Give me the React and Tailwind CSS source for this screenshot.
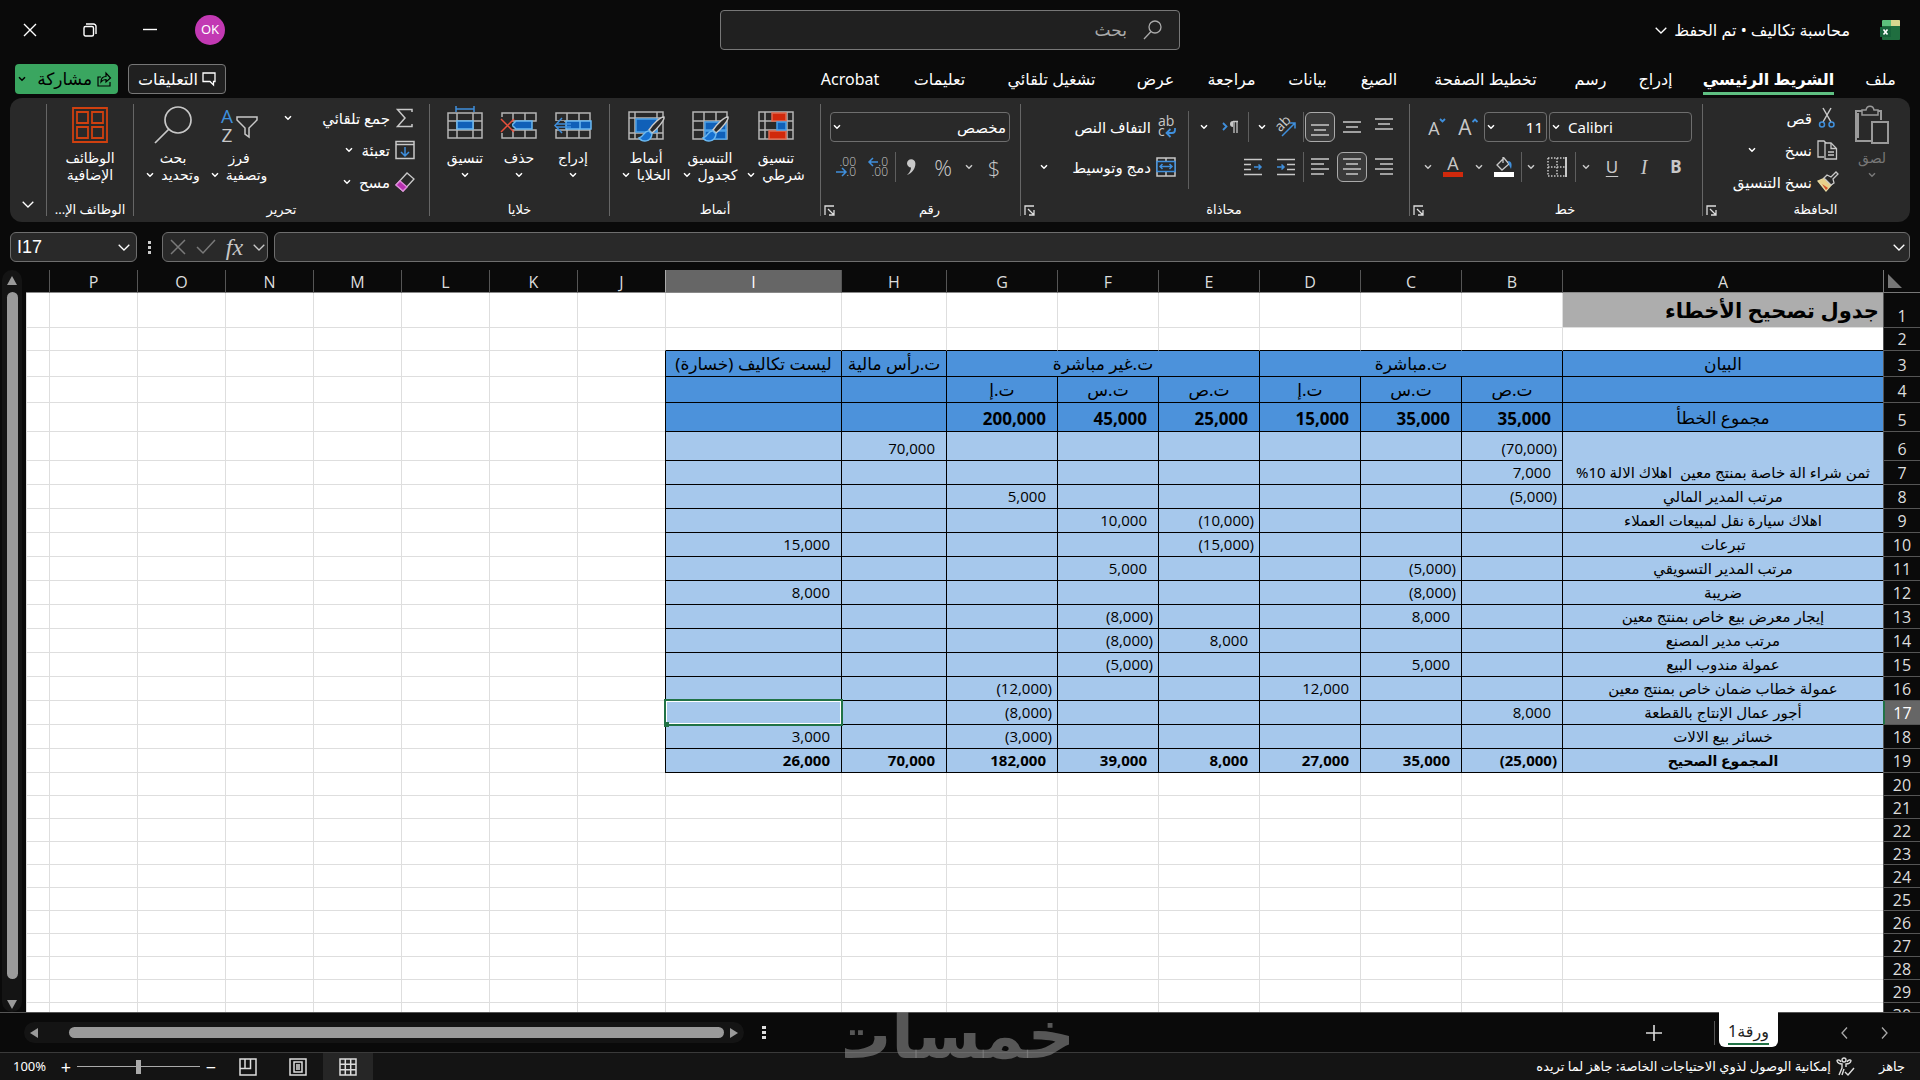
import React, { useState } from "react";
import clsx from "clsx";


const tabs = [
  { name: "ملف", width: "w-[59px]" },
  { name: "الشريط الرئيسي", width: "w-[165px]", active: true },
  { name: "إدراج", width: "w-[61px]" },
  { name: "رسم", width: "w-[69px]" },
  { name: "تخطيط الصفحة", width: "w-[141px]" },
  { name: "الصيغ", width: "w-[72px]" },
  { name: "بيانات", width: "w-[71px]" },
  { name: "مراجعة", width: "w-[81px]" },
  { name: "عرض", width: "w-[71px]" },
  { name: "تشغيل تلقائي", width: "w-[137px]" },
  { name: "تعليمات", width: "w-[87px]" },
  { name: "Acrobat", width: "w-[92px]" },
];

const columns = [
  { name: "A", width: "w-[321px]" },
  { name: "B", width: "w-[101px]" },
  { name: "C", width: "w-[101px]" },
  { name: "D", width: "w-[101px]" },
  { name: "E", width: "w-[101px]" },
  { name: "F", width: "w-[101px]" },
  { name: "G", width: "w-[111px]" },
  { name: "H", width: "w-[105px]" },
  { name: "I", width: "w-[176px]" },
  { name: "J", width: "w-[88px]" },
  { name: "K", width: "w-[88px]" },
  { name: "L", width: "w-[88px]" },
  { name: "M", width: "w-[88px]" },
  { name: "N", width: "w-[88px]" },
  { name: "O", width: "w-[88px]" },
  { name: "P", width: "w-[88px]" },
  { name: "", width: "" },
];

// label first, then the columns B..I
const entries = {
  5: ["مجموع الخطأ", "35,000", "35,000", "15,000", "25,000", "45,000", "200,000", "", ""],
  6: ["ثمن شراء الة خاصة بمنتج معين  اهلاك الالة 10%", "(70,000)", "", "", "", "", "", "70,000", ""],
  7: [null, "7,000", "", "", "", "", "", "", ""],
  8: ["مرتب المدير المالي", "(5,000)", "", "", "", "", "5,000", "", ""],
  9: ["اهلاك سيارة نقل لمبيعات العملاء", "", "", "", "(10,000)", "10,000", "", "", ""],
  10: ["تبرعات", "", "", "", "(15,000)", "", "", "", "15,000"],
  11: ["مرتب المدير التسويقي", "", "(5,000)", "", "", "5,000", "", "", ""],
  12: ["ضريبة", "", "(8,000)", "", "", "", "", "", "8,000"],
  13: ["إيجار معرض بيع خاص بمنتج معين", "", "8,000", "", "", "(8,000)", "", "", ""],
  14: ["مرتب مدير المصنع", "", "", "", "8,000", "(8,000)", "", "", ""],
  15: ["عمولة مندوب البيع", "", "5,000", "", "", "(5,000)", "", "", ""],
  16: ["عمولة خطاب ضمان خاص بمنتج معين", "", "", "12,000", "", "", "(12,000)", "", ""],
  17: ["أجور عمال الإنتاج بالقطعة", "8,000", "", "", "", "", "(8,000)", "", ""],
  18: ["خسائر بيع الالات", "", "", "", "", "", "(3,000)", "", "3,000"],
  19: ["المجموع الصحيح", "(25,000)", "35,000", "27,000", "8,000", "39,000", "182,000", "70,000", "26,000"],
};

const rowHeight = (n) => {
  if (n === 1) return "h-[35px]";
  if (n === 3 || n === 4) return "h-[26px]";
  if (n === 5 || n === 6) return "h-[29px]";
  if (n > 6 && n < 20) return "h-[24px]";
  return "h-[23px]";
};


/* ---------- icons ---------- */

function Chevron({ className = "w-2 h-[6px]" }) {
  return (
    <svg viewBox="0 0 8 6" className={clsx("shrink-0", className)} fill="none" stroke="currentColor" strokeWidth="1.5">
      <path d="M1 1.2l3 3 3-3" />
    </svg>
  );
}

function WideChevron({ className = "w-3 h-[7px]" }) {
  return (
    <svg viewBox="0 0 12 7" className={clsx("shrink-0", className)} fill="none" stroke="currentColor" strokeWidth="1.3">
      <path d="M.7.7L6 6l5.300-5.300" />
    </svg>
  );
}

function Lines({ rows }) {
  return (
    <svg viewBox="0 0 18 18" className="w-[18px] h-[18px]" stroke="#c8c8c8" strokeWidth="1.5">
      {rows.map(([x1, x2, y]) => (
        <path key={y} d={`M${x1} ${y}H${x2}`} />
      ))}
    </svg>
  );
}

function GridSvg({ children }) {
  return (
    <svg viewBox="0 0 38 38" className="w-[38px] h-[38px]" fill="none" stroke="#b5b5b5" strokeWidth="1.5">
      {children}
    </svg>
  );
}

function Brush() {
  return (
    <g>
      <path d="M37 11c-3-1-12 8-15 13l3 3c5-4 13-13 12-16z" fill="#292929" stroke="#c8c8c8" />
      <path d="M22 25c-5-1-5 6-10 7 3 4 12 5 13-4z" fill="#1670d0" stroke="#6bb8f0" />
    </g>
  );
}

const icons = {
  paste: (
    <svg viewBox="0 0 36 40" className="w-9 h-10" fill="none" stroke="#9a9a9a" strokeWidth="2">
      <path d="M10 6H2v30h15M21 6h6v9M4 33V8" />
      <path d="M8 10V5h4c1-5 7-5 8 0h4v5z" fill="#292929" strokeWidth="1.5" />
      <path d="M18 17h16v21H18z" fill="#292929" />
    </svg>
  ),
  cut: (
    <svg viewBox="0 0 22 22" className="w-[22px] h-[22px]" fill="none" strokeWidth="1.500">
      <path d="M7 1l8 14M15 1L7 15" stroke="#c8c8c8" />
      <circle cx="6" cy="17.500" r="2.500" stroke="#3f8fdc" />
      <circle cx="15.500" cy="17.500" r="2.500" stroke="#3f8fdc" />
    </svg>
  ),
  copy: (
    <svg viewBox="0 0 22 22" className="w-[22px] h-[22px]" fill="none" stroke="#c8c8c8" strokeWidth="1.300">
      <path d="M8 18H2V2h6l3 3" />
      <path d="M9 4h6l5.500 5.500V20H9z" fill="#292929" />
      <path d="M15 4v5.500h5M12 13h6M12 16h6" />
    </svg>
  ),
  painter: (
    <svg viewBox="0 0 22 22" className="w-[22px] h-[22px]" fill="none" strokeWidth="1.300">
      <path d="M2 10l7-3 7 6-6 7z" fill="#e8d08a" stroke="#e8d9a0" />
      <path d="M6 13l6 4-2 2z" fill="#d2502a" />
      <path d="M8 7l3-3 4 2 5-5 2 2-5 5 1 4-3 2z" fill="#292929" stroke="#c8c8c8" />
    </svg>
  ),
  borders: (
    <svg viewBox="0 0 20 20" className="w-5 h-5" stroke="#c8c8c8" fill="none" strokeWidth="1.500">
      <path d="M1 1h18M1 19h18M1 10h18M1 1v18M10 1v18" strokeDasharray="1.500 1.500" />
      <path d="M19 0v20" strokeWidth="2" />
    </svg>
  ),
  bucket: (
    <svg viewBox="0 0 20 22" className="w-5 h-[22px]" fill="none" strokeWidth="1.300">
      <path d="M3 9l7-7 5 6-7 6zM9 1v6" stroke="#c8c8c8" />
      <path d="M14 5c4 0 4 4 3 8l-2-4" fill="#3f8fdc" />
      <path d="M0 16h20v5H0z" fill="#fff" />
    </svg>
  ),
  fontColor: (
    <svg viewBox="0 0 20 22" className="w-5 h-[22px]">
      <text x="10" y="14" textAnchor="middle" fontSize="18" fill="#c8c8c8" fontFamily="Open Sans">A</text>
      <path d="M0 16h20v5H0z" fill="#d0290c" />
    </svg>
  ),
  grow: (
    <svg viewBox="0 0 22 22" className="w-[22px] h-[22px]">
      <text x="8" y="19" textAnchor="middle" fontSize="21" fill="#c8c8c8" fontFamily="Open Sans">A</text>
      <path d="M15.500 6l2.500-2.500L20.500 6" fill="none" stroke="#3f8fdc" strokeWidth="1.800" />
    </svg>
  ),
  shrink: (
    <svg viewBox="0 0 22 22" className="w-[22px] h-[22px]">
      <text x="9" y="19" textAnchor="middle" fontSize="18" fill="#c8c8c8" fontFamily="Open Sans">A</text>
      <path d="M15 3l2.500 2.500L20 3" fill="none" stroke="#3f8fdc" strokeWidth="1.800" />
    </svg>
  ),
  orient: (
    <svg viewBox="0 0 22 22" className="w-[22px] h-[22px]">
      <text x="0" y="12" fontSize="14" fill="#c8c8c8" fontFamily="Open Sans" transform="rotate(-45 8 8)">ab</text>
      <path d="M7 20L20 7M14.500 7H20v5.500" fill="none" stroke="#3f8fdc" strokeWidth="1.500" />
    </svg>
  ),
  paragraph: (
    <svg viewBox="0 0 18 18" className="w-[18px] h-[18px]" fill="none">
      <path d="M2 5l3.500 3.500L2 12" stroke="#3f8fdc" strokeWidth="1.800" />
      <path d="M13 15V4M16 15V4M17 3.500h-5" stroke="#c8c8c8" strokeWidth="1.300" />
      <path d="M12 3a3 3 0 000 6z" fill="#c8c8c8" />
    </svg>
  ),
  wrap: (
    <svg viewBox="0 0 20 22" className="w-5 h-[22px]" fill="none">
      <text x="2" y="10" fontSize="14" fill="#c8c8c8" fontFamily="Open Sans">ab</text>
      <text x="2" y="20" fontSize="14" fill="#c8c8c8" fontFamily="Open Sans">c</text>
      <path d="M19 12v2c0 2-1 3-3 3h-5M14.500 13l-4 4 4 4" stroke="#3f8fdc" strokeWidth="1.800" />
    </svg>
  ),
  merge: (
    <svg viewBox="0 0 20 20" className="w-5 h-5" fill="none" strokeWidth="1.500">
      <path d="M1 1h18v18H1zM10 1v4M10 15v4" stroke="#c8c8c8" />
      <path d="M1 4.500h18v10H1z" fill="#292929" stroke="#3f8fdc" />
      <path d="M4 9.500h12M6.500 7L4 9.500 6.500 12M13.500 7L16 9.500 13.500 12" stroke="#3f8fdc" />
    </svg>
  ),
  indentRight: (
    <svg viewBox="0 0 18 18" className="w-[18px] h-[18px]" fill="none" stroke="#c8c8c8" strokeWidth="1.500">
      <path d="M0 1.500h18M10 6.500h8M10 11.500h8M0 16.500h18" />
      <path d="M0 9h7M4.500 6.500L7 9l-2.500 2.500" stroke="#3f8fdc" />
    </svg>
  ),
  indentLeft: (
    <svg viewBox="0 0 18 18" className="w-[18px] h-[18px]" fill="none" stroke="#c8c8c8" strokeWidth="1.500">
      <path d="M0 1.500h18M0 6.500h7M0 11.500h7M0 16.500h18" />
      <path d="M10 9h7M14.500 6.500L17 9l-2.500 2.500" stroke="#3f8fdc" />
    </svg>
  ),
  moreDecimals: (
    <svg viewBox="0 0 20 22" className="w-5 h-[22px]" fill="none" fontSize="12" fontFamily="Open Sans">
      <text x="20" y="10" textAnchor="end" fill="#c8c8c8">.0</text>
      <text x="20" y="20" textAnchor="end" fill="#c8c8c8">.00</text>
      <path d="M10 6H1M5 2L1 6l4 4" stroke="#3f8fdc" strokeWidth="1.500" />
    </svg>
  ),
  lessDecimals: (
    <svg viewBox="0 0 20 22" className="w-5 h-[22px]" fill="none" fontSize="12" fontFamily="Open Sans">
      <text x="20" y="10" textAnchor="end" fill="#c8c8c8">.00</text>
      <text x="20" y="20" textAnchor="end" fill="#c8c8c8">.0</text>
      <path d="M0 16h10M6 12l4 4-4 4" stroke="#3f8fdc" strokeWidth="1.500" />
    </svg>
  ),
  conditional: (
    <GridSvg>
      <path d="M2 6h34v27H2zM2 15h34M2 24h34M8 6v27M30 6v27" />
      <path d="M15 7h14v8H15zM12 25h17v8H12z" fill="#d0290c" stroke="#e0694f" />
      <path d="M20 16h9v8h-9z" fill="#1060b8" stroke="#4aa0e8" />
    </GridSvg>
  ),
  formatTable: (
    <GridSvg>
      <path d="M2 6h34v27H2zM2 15h34M2 24h34M13 6v27M25 6v27" />
      <path d="M14 16h21v8H14zM14 25h21v8H14z" fill="#1060b8" stroke="#4aa0e8" />
      <Brush />
    </GridSvg>
  ),
  cellStyles: (
    <GridSvg>
      <path d="M2 6h34v27H2zM2 12h34M8 6v27M30 6v27M2 27h34" />
      <path d="M9 13h21v13H9z" fill="#1060b8" stroke="#4aa0e8" />
      <Brush />
    </GridSvg>
  ),
  insertCells: (
    <GridSvg>
      <path d="M2 7h34v25H2zM13 7v25M25 7v25M2 15h34M2 24h34" />
      <path d="M12 15h25v8H12z" fill="#1060b8" stroke="#6bb8f0" />
      <path d="M26 15v8" stroke="#6bb8f0" />
      <path d="M0 15h10v8H0z" fill="#292929" stroke="none" />
      <path d="M17 18H2M17 21H2M8 12l-7 7.500L8 27" stroke="#3f8fdc" />
    </GridSvg>
  ),
  deleteCells: (
    <GridSvg>
      <path d="M2 7h34v8H2zM2 24h34v8H2zM13 7v8M25 7v8M13 24v8M25 24v8" />
      <path d="M12 19l4-4h16v8H16z" fill="#1060b8" stroke="#6bb8f0" />
      <path d="M1 11h11v16H1z" fill="#292929" stroke="none" />
      <path d="M1 13l13 13M14 13L1 26" stroke="#e8503c" />
    </GridSvg>
  ),
  formatCells: (
    <GridSvg>
      <path d="M2 7h34v25H2zM11 7v25M27 7v25M2 15h34M2 24h34" />
      <path d="M11 15h16v8H11z" fill="#1060b8" stroke="#6bb8f0" />
      <path d="M10 3h18M10 0v6M28 0v6" stroke="#3f8fdc" />
    </GridSvg>
  ),
  sum: (
    <svg viewBox="0 0 20 20" className="w-5 h-5" fill="none" stroke="#c8c8c8" strokeWidth="1.500">
      <path d="M17 4V1.500H2.500L10 10l-7.500 8.500H17V16" />
    </svg>
  ),
  fill: (
    <svg viewBox="0 0 20 20" className="w-5 h-5" fill="none" stroke="#c8c8c8" strokeWidth="1.500">
      <path d="M1 1.500h18v17H1zM1 4.500h18" />
      <path d="M10 7v9M6 12l4 4 4-4" stroke="#3f8fdc" />
    </svg>
  ),
  eraser: (
    <svg viewBox="0 0 20 20" className="w-5 h-5" fill="none" stroke="#c8c8c8" strokeWidth="1.300">
      <path d="M1 13L12 1l7 6L8 19z" />
      <path d="M1 13l4-4 7 6-4 4z" fill="#b530ae" stroke="#e08adc" />
    </svg>
  ),
  sort: (
    <svg viewBox="0 0 38 38" className="w-[38px] h-[38px]" fill="none" strokeWidth="1.500">
      <text x="7" y="17" textAnchor="middle" fontSize="19" fill="#3f8fdc" fontFamily="Open Sans">A</text>
      <text x="7" y="36" textAnchor="middle" fontSize="19" fill="#c8c8c8" fontFamily="Open Sans">Z</text>
      <path d="M17 11h20v3l-8 8v9l-4-3v-6l-8-8z" stroke="#c8c8c8" />
    </svg>
  ),
  find: (
    <svg viewBox="0 0 38 38" className="w-[38px] h-[38px]" fill="none" stroke="#c8c8c8" strokeWidth="1.700">
      <circle cx="24" cy="14" r="13" />
      <path d="M15 23L1 37" />
    </svg>
  ),
  addins: (
    <svg viewBox="0 0 38 38" className="w-[38px] h-[38px]" fill="none" stroke="#d0400f" strokeWidth="1.800">
      <path d="M2 2h34v34H2z" />
      <path d="M6 6h11v11H6zM21 6h11v11H21zM6 21h11v11H6zM21 21h11v11H21z" />
    </svg>
  ),
};


/* ---------- ribbon parts ---------- */

function Divider() {
  return <div className="w-px my-[6px] shrink-0 bg-[#666]" />;
}

function Group({ label, width, launcher, children }) {
  return (
    <section className={clsx("flex flex-col shrink-0", width)}>
      <div className="flex h-[102px]">{children}</div>
      <div className="flex items-center h-5 text-[13px]">
        <span className="flex-1 text-center whitespace-nowrap">{label}</span>
        {launcher && (
          <button className="w-[18px] pr-1" aria-label={label}>
            <svg viewBox="0 0 11 11" className="w-[11px] h-[11px]" fill="none" stroke="#ddd" strokeWidth="1.300">
              <path d="M1 10V1h9M4 4l5.500 5.500M10 5v5H5" />
            </svg>
          </button>
        )}
      </div>
    </section>
  );
}

function Tool({ children, width = "w-8", active, label }) {
  return (
    <button aria-label={label} className={clsx("flex items-center justify-center shrink-0 h-[30px]", width)}>
      {active ? (
        <span className="flex items-center justify-center w-[30px] h-[30px] rounded-md border border-[#aaa] bg-[#3a3a3a]">{children}</span>
      ) : (
        children
      )}
    </button>
  );
}

function Sep() {
  return <div className="w-px h-[30px] shrink-0 bg-[#5e5e5e]" />;
}

function Big({ icon, width, lines, chevron = true, below, dim }) {
  return (
    <button className={clsx("flex flex-col items-center shrink-0 pt-2 text-sm leading-[17px]", width, dim && "text-[#777]")}>
      <span className="flex items-center justify-center h-[38px]">{icon}</span>
      <span className="mt-[5px] whitespace-nowrap">{lines[0]}</span>
      <span className="flex items-center justify-center gap-[7px] h-[17px] whitespace-nowrap">
        {!below && lines[1]}
        {chevron && <Chevron />}
      </span>
    </button>
  );
}

function Small({ icon, text, chevron, spread }) {
  return (
    <button className={clsx("flex items-center h-8 text-[15px] whitespace-nowrap", spread && "justify-between")}>
      <span className="flex items-center gap-1">
        <span className="flex items-center justify-center w-[22px]">{icon}</span>
        {text}
      </span>
      {chevron && <Chevron className={spread ? "w-2 h-[6px] ml-1" : "w-2 h-[6px] mr-2"} />}
    </button>
  );
}

function Ribbon() {
  return (
    <div className="flex h-[124px] mx-[10px] rounded-xl bg-[#292929] text-white overflow-hidden">

      <Group label="الحافظة" width="w-[207px]" launcher>
        <div className="flex pr-4">
          <Big icon={icons.paste} width="w-11" lines={["لصق"]} below dim />
          <div className="flex flex-col w-[120px] mr-3 pt-1">
            <Small icon={icons.cut} text="قص" />
            <div className="flex items-center w-[90px]">
              <div className="flex-1"><Small icon={icons.copy} text="نسخ" /></div>
              <Chevron />
            </div>
            <Small icon={icons.painter} text="نسخ التنسيق" />
          </div>
        </div>
      </Group>
      <Divider />

      <Group label="خط" width="w-[292px]" launcher>
        <div className="flex flex-col gap-[10px] pt-[14px] pr-[10px]">
          <div className="flex">
            <div className="relative flex items-center">
              <select aria-label="نوع الخط" dir="ltr" className="appearance-none w-[143px] h-[30px] pl-[18px] rounded border border-[#6e6e6e] text-[15px] font-['Noto_Sans']">
                <option>Calibri</option>
              </select>
              <Chevron className="absolute left-[3px] w-2 h-[6px]" />
            </div>
            <div className="relative flex items-center mr-[2px]">
              <select aria-label="حجم الخط" dir="rtl" className="appearance-none w-[63px] h-[30px] pr-[3px] rounded border border-[#6e6e6e] text-[15px] font-['Noto_Sans']">
                <option>11</option>
              </select>
              <Chevron className="absolute left-[3px] w-2 h-[6px]" />
            </div>
            <Tool label="تكبير الخط">{icons.grow}</Tool>
            <Tool label="تصغير الخط">{icons.shrink}</Tool>
          </div>
          <div className="flex items-center text-[17px] text-[#c8c8c8] font-['Noto_Sans']">
            <Tool><b>B</b></Tool>
            <Tool><i className="font-['Liberation_Serif'] text-xl">I</i></Tool>
            <Tool><span className="underline underline-offset-3">U</span></Tool>
            <Tool width="w-5" label="تسطير"><Chevron /></Tool>
            <Sep />
            <Tool width="w-9" label="حدود">{icons.borders}</Tool>
            <Tool width="w-[17px]" label="خيارات الحدود"><Chevron /></Tool>
            <Sep />
            <Tool width="w-[34px]" label="لون التعبئة">{icons.bucket}</Tool>
            <Tool width="w-[17px]" label="ألوان التعبئة"><Chevron /></Tool>
            <Tool width="w-[34px]" label="لون الخط">{icons.fontColor}</Tool>
            <Tool width="w-[17px]" label="ألوان الخط"><Chevron /></Tool>
          </div>
        </div>
      </Group>
      <Divider />

      <Group label="محاذاة" width="w-[388px]" launcher>
        <div className="flex flex-col gap-[10px] pt-[14px] pr-[9px] w-[220px]">
          <div className="flex">
            <Tool label="أعلى"><Lines rows={[[0, 18, 1], [3, 15, 6], [0, 18, 11]]} /></Tool>
            <Tool label="وسط"><Lines rows={[[0, 18, 4], [3, 15, 9], [0, 18, 14]]} /></Tool>
            <Tool label="أسفل" active><Lines rows={[[0, 18, 7], [3, 15, 12], [0, 18, 17]]} /></Tool>
            <Sep />
            <Tool width="w-[34px]" label="الاتجاه">{icons.orient}</Tool>
            <Tool width="w-[14px]" label="خيارات الاتجاه"><Chevron /></Tool>
            <div className="w-[6px]" />
            <Sep />
            <Tool width="w-9" label="من اليسار إلى اليمين">{icons.paragraph}</Tool>
            <Tool width="w-4" label="اتجاه النص"><Chevron /></Tool>
          </div>
          <div className="flex">
            <Tool label="يمين"><Lines rows={[[0, 18, 1], [5, 18, 6], [0, 18, 11], [5, 18, 16]]} /></Tool>
            <Tool label="توسيط" active><Lines rows={[[0, 18, 1], [3, 15, 6], [0, 18, 11], [3, 15, 16]]} /></Tool>
            <Tool label="يسار"><Lines rows={[[0, 18, 1], [0, 13, 6], [0, 18, 11], [0, 13, 16]]} /></Tool>
            <Sep />
            <Tool width="w-[34px]" label="إنقاص المسافة">{icons.indentRight}</Tool>
            <Tool label="زيادة المسافة">{icons.indentLeft}</Tool>
          </div>
        </div>
        <div className="w-px mt-[13px] mb-[11px] bg-[#5e5e5e]" />
        <div className="flex flex-col gap-2 pt-[13px] pr-[11px] w-[152px]">
          <Small icon={icons.wrap} text="التفاف النص" />
          <Small icon={icons.merge} text="دمج وتوسيط" chevron spread />
        </div>
      </Group>
      <Divider />

      <Group label="رقم" width="w-[199px]" launcher>
        <div className="flex flex-col gap-[10px] pt-[14px] pr-[10px]">
          <div className="relative flex items-center">
            <select aria-label="تنسيق الأرقام" className="appearance-none w-[180px] h-[30px] pr-[3px] rounded border border-[#6e6e6e] text-[15px]">
              <option>مخصص</option>
            </select>
            <Chevron className="absolute left-[3px] w-2 h-[6px]" />
          </div>
          <div className="flex text-[22px] text-[#c8c8c8] font-['Open_Sans'] font-light">
            <Tool>$</Tool>
            <Tool width="w-[18px]" label="تنسيق العملة"><Chevron /></Tool>
            <Tool width="w-[34px]">%</Tool>
            <Tool width="w-[30px]" label="نمط الفاصلة">
              <svg viewBox="0 0 12 18" className="w-3 h-[18px]" fill="#c8c8c8">
                <path d="M2 5.500a4.200 4.200 0 118.400 0C10.400 11 7 15 2 17c3-3 4-5 4-7.500-2 0-4-1.800-4-4z" />
              </svg>
            </Tool>
            <Sep />
            <Tool width="w-[34px]" label="زيادة المنازل العشرية">{icons.moreDecimals}</Tool>
            <Tool width="w-[30px]" label="إنقاص المنازل العشرية">{icons.lessDecimals}</Tool>
          </div>
        </div>
      </Group>
      <Divider />

      <Group label="أنماط" width="w-[210px]">
        <div className="flex pr-[11px]">
          <Big icon={icons.conditional} width="w-[66px]" lines={["تنسيق", "شرطي"]} />
          <Big icon={icons.formatTable} width="w-[66px]" lines={["التنسيق", "كجدول"]} />
          <Big icon={icons.cellStyles} width="w-[62px]" lines={["أنماط", "الخلايا"]} />
        </div>
      </Group>
      <Divider />

      <Group label="خلايا" width="w-[179px]">
        <div className="flex pr-[9px]">
          <Big icon={icons.insertCells} width="w-[54px]" lines={["إدراج"]} below />
          <Big icon={icons.deleteCells} width="w-[54px]" lines={["حذف"]} below />
          <Big icon={icons.formatCells} width="w-[54px]" lines={["تنسيق"]} below />
        </div>
      </Group>
      <Divider />

      <Group label="تحرير" width="w-[295px]">
        <div className="flex flex-col w-[149px] pt-1 pr-[13px]">
          <Small icon={icons.sum} text="جمع تلقائي" chevron spread />
          <Small icon={icons.fill} text="تعبئة" chevron />
          <Small icon={icons.eraser} text="مسح" chevron />
        </div>
        <div className="flex pr-2">
          <Big icon={icons.sort} width="w-[66px]" lines={["فرز", "وتصفية"]} />
          <Big icon={icons.find} width="w-[66px]" lines={["بحث", "وتحديد"]} />
        </div>
      </Group>
      <Divider />

      <Group label="الوظائف الإ..." width="w-[86px]">
        <Big icon={icons.addins} width="w-[86px]" lines={["الوظائف", "الإضافية"]} chevron={false} />
      </Group>
      <Divider />

      <button className="flex items-end justify-center flex-1 pb-[14px]" aria-label="طي الشريط">
        <WideChevron />
      </button>
    </div>
  );
}


/* ---------- sheet ---------- */

const cellBase = "border-b border-l p-0 overflow-hidden whitespace-nowrap leading-none";

function Num({ value, row }) {
  const bold = row === 5 || row === 19;
  const negative = value.startsWith("(");
  return (
    <span
      dir="ltr"
      className={clsx(
        "block text-right font-['Open_Sans']",
        negative ? "pr-[5px]" : "pr-[11px]",
        row === 5 ? "text-[17px]" : "text-[15px]",
        bold && "font-bold"
      )}
    >
      {value}
    </span>
  );
}

function RowCells({ n }) {
  const blank = (count) =>
    Array.from({ length: count }, (_, i) => (
      <td key={"blank" + i} className={clsx(cellBase, "bg-white border-[#dedede]")} />
    ));

  if (n === 1) {
    return (
      <>
        <td className={clsx(cellBase, "bg-[#adadad] border-[#dedede] pr-1 text-right text-[21px] font-bold")}>جدول تصحيح الأخطاء</td>
        {blank(16)}
      </>
    );
  }

  if (n === 2) {
    return (
      <>
        {Array.from({ length: 9 }, (_, i) => (
          <td key={i} className={clsx(cellBase, "bg-white border-b-black border-l-[#dedede]")} />
        ))}
        {blank(8)}
      </>
    );
  }

  const head = clsx(cellBase, "bg-[#4c92db] border-black text-center text-[17px]");

  if (n === 3) {
    return (
      <>
        <td className={head}>البيان</td>
        <td className={head} colSpan={3}>ت.مباشرة</td>
        <td className={head} colSpan={3}>ت.غير مباشرة</td>
        <td className={head}>ت.رأس مالية</td>
        <td className={head}>ليست تكاليف (خسارة)</td>
        {blank(8)}
      </>
    );
  }

  if (n === 4) {
    return (
      <>
        {["", "ت.ص", "ت.س", "ت.إ", "ت.ص", "ت.س", "ت.إ", "", ""].map((text, i) => (
          <td key={i} className={head}>{text}</td>
        ))}
        {blank(8)}
      </>
    );
  }

  if (!entries[n]) return blank(17);

  const [label, ...values] = entries[n];
  const body = n === 5 ? "bg-[#4c92db]" : "bg-[#a6c8ec]";

  return (
    <>
      {label !== null && (
        <td
          rowSpan={n === 6 ? 2 : 1}
          className={clsx(
            cellBase, body, "border-black text-center whitespace-pre",
            n === 6 ? "align-bottom pb-1" : "align-middle",
            n === 5 && "text-[17px]",
            n === 19 && "text-sm font-bold",
            n !== 5 && n !== 19 && "text-[15px]"
          )}
        >
          {label}
        </td>
      )}
      {values.map((value, i) =>
        n === 17 && i === 7 ? (
          <td key={i} className={clsx(cellBase, body, "relative overflow-visible border-black")}>
            <div className="absolute -inset-[2px] border-2 border-[#217346]">
              <div className="h-full border border-white" />
              <div className="absolute -left-[2px] -bottom-[3px] w-[5px] h-[5px] bg-[#217346]" />
            </div>
          </td>
        ) : (
          <td key={i} className={clsx(cellBase, body, "border-black", n === 6 ? "align-bottom pb-1" : "align-middle", n === 5 && "pt-[2px]")}>
            {value && <Num value={value} row={n} />}
          </td>
        )
      )}
      {blank(8)}
    </>
  );
}

function Sheet() {
  return (
    <div className="flex-1 min-h-0 overflow-hidden">
      <table className="w-full table-fixed border-separate border-spacing-0 text-black">
        <colgroup>
          <col className="w-[37px]" />
          {columns.map((c, i) => (
            <col key={i} className={c.width} />
          ))}
        </colgroup>
        <thead>
          <tr className="h-[23px] bg-[#0a0a0a] text-[#ddd] font-['Open_Sans'] text-base">
            <th className="p-0 border-b border-l border-[#777]">
              <svg viewBox="0 0 14 14" className="w-[14px] h-[14px] mr-[18px]" fill="#777"><path d="M0 0v14h14z" /></svg>
            </th>
            {columns.map((c, i) => (
              <th
                key={i}
                className={clsx(
                  "p-0 pt-[2px] border-b border-l border-b-[#888] font-normal leading-none",
                  c.name === "I" ? "bg-[#666] border-l-[#aaa] text-white" : "border-l-[#555]",
                  i === 16 && "border-l-0"
                )}
              >
                {c.name}
              </th>
            ))}
          </tr>
        </thead>
        <tbody>
          {Array.from({ length: 30 }, (_, i) => i + 1).map((n) => (
            <tr key={n} className={rowHeight(n)}>
              <th
                className={clsx(
                  "p-0 border-b border-b-[#555] border-l text-center font-normal font-['Open_Sans'] text-base leading-none",
                  n === 17 ? "bg-[#666] text-white border-l-2 border-l-[#217346]" : "bg-[#0a0a0a] text-[#ddd] border-l-[#555]",
                  n < 7 && "align-bottom pb-[3px]",
                  n > 19 && "pt-[2px]"
                )}
              >
                {n}
              </th>
              <RowCells n={n} />
            </tr>
          ))}
        </tbody>
      </table>
    </div>
  );
}

function Arrow({ d }) {
  return (
    <svg viewBox="0 0 12 12" className="w-3 h-3 shrink-0" fill="#9a9a9a"><path d={d} /></svg>
  );
}


function App() {

  const [zoom, setZoom] = useState(100);
  const [formula, setFormula] = useState("");

  return (
    <div dir="rtl" className="relative flex flex-col h-screen overflow-hidden bg-[#0a0a0a] text-white font-['Noto_Sans','DejaVu_Sans',sans-serif] [&_svg]:[direction:ltr] [&_svg]:overflow-visible">

      {/* title bar */}
      <header className="flex items-center justify-between h-[60px] pr-5 pl-[18px]">
        <div className="flex items-center flex-1 text-base">
          <svg viewBox="0 0 20 20" className="w-5 h-5 ml-[30px]">
            <path d="M3 0h16a1 1 0 011 1v18a1 1 0 01-1 1H3a1 1 0 01-1-1V1a1 1 0 011-1z" fill="#1f6e3f" />
            <path d="M3 0h8v6H2V1z" fill="#5cc07c" />
            <path d="M11 0h8a1 1 0 011 1v5h-9z" fill="#d8d890" />
            <path d="M0 7h11v10H0z" fill="#17633a" />
            <path d="M3.500 9.500l4 5M7.500 9.500l-4 5" stroke="#fff" strokeWidth="1.600" />
          </svg>
          <span className="whitespace-nowrap">محاسبة تكاليف • تم الحفظ</span>
          <WideChevron className="w-3 h-[7px] mr-[7px]" />
        </div>

        <label className="flex items-center gap-4 w-[460px] h-10 pr-4 mr-[18px] rounded border border-[#777] bg-[#202020]">
          <svg viewBox="0 0 20 20" className="w-5 h-5" fill="none" stroke="#aaa" strokeWidth="1.300">
            <circle cx="12" cy="7" r="6" />
            <path d="M8 11.500L1 19" />
          </svg>
          <input aria-label="بحث" placeholder="بحث" className="flex-1 min-w-0 text-[17px] outline-none placeholder:text-[#aaa]" />
        </label>

        <div className="flex items-center justify-end flex-1">
          <button className="w-[30px] h-[30px] ml-[33px] rounded-full bg-[#c239b3] text-[13px]">OK</button>
          <button className="w-6 ml-9 flex justify-center" aria-label="تصغير">
            <svg viewBox="0 0 14 14" className="w-[14px] h-[14px]" stroke="#fff" strokeWidth="1.400"><path d="M0 6.500h14" /></svg>
          </button>
          <button className="w-6 ml-9 flex justify-center" aria-label="استعادة">
            <svg viewBox="0 0 14 14" className="w-[14px] h-[14px]" fill="none" stroke="#fff" strokeWidth="1.400">
              <rect x="1" y="3.500" width="9.500" height="9.500" rx="1.500" />
              <path d="M3 1h7.500A2.500 2.500 0 0113 3.500V11" />
            </svg>
          </button>
          <button className="w-6 flex justify-center" aria-label="إغلاق">
            <svg viewBox="0 0 14 14" className="w-[14px] h-[14px]" stroke="#fff" strokeWidth="1.400"><path d="M1 1l12 12M13 1L1 13" /></svg>
          </button>
        </div>
      </header>

      {/* tabs */}
      <nav className="flex items-center h-[38px] pr-[10px] pl-[15px]">
        {tabs.map((tab) => (
          <a key={tab.name} href="#" className={clsx("flex justify-center text-base whitespace-nowrap", tab.width)}>
            <span className={clsx("h-8 leading-8", tab.active && "font-bold border-b-3 border-[#5fc082]")}>{tab.name}</span>
          </a>
        ))}
        <div className="flex-1" />
        <button className="flex items-center justify-center gap-1 w-[98px] h-[30px] ml-[10px] rounded border border-[#777] bg-[#202020] text-base whitespace-nowrap">
          <svg viewBox="0 0 14 14" className="w-[14px] h-[14px] shrink-0" fill="none" stroke="#fff" strokeWidth="1.300">
            <path d="M1 1h12v8.500h-1.500V13L8 9.500H1z" />
          </svg>
          التعليقات
        </button>
        <button className="flex items-center justify-between w-[103px] h-[30px] pr-[7px] pl-[3px] rounded bg-[#3aa660] text-black text-[17px] whitespace-nowrap">
          <span className="flex items-center gap-[5px]">
            <svg viewBox="0 0 14 15" className="w-[14px] h-[15px]" fill="none" stroke="#000" strokeWidth="1.200">
              <path d="M4 5H1v9h12v-4" />
              <path d="M4 10c0-4 2-5.500 5-5.500V1l4.500 5L9 10V7.500C7 7.500 5.500 8 4 10z" />
            </svg>
            مشاركة
          </span>
          <Chevron />
        </button>
      </nav>

      <Ribbon />

      {/* formula bar */}
      <div className="flex items-center h-12 pt-[2px] mx-[10px]">
        <div className="flex items-center flex-1 h-[30px] ml-[6px] pl-1 pr-1 rounded-md border border-[#6e6e6e] bg-[#292929]">
          <WideChevron />
          <input aria-label="شريط الصيغة" dir="ltr" value={formula} onChange={(e) => setFormula(e.target.value)} className="flex-1 outline-none" />
        </div>
        <div className="flex items-center justify-between w-[106px] h-[30px] pr-[2px] pl-[7px] rounded-md border border-[#6e6e6e] bg-[#292929] text-[#c8c8c8]">
          <WideChevron />
          <button dir="ltr" className="font-['Liberation_Serif'] italic text-[24px] leading-none">fx</button>
          <button aria-label="إدخال">
            <svg viewBox="0 0 20 16" className="w-5 h-4" fill="none" stroke="#7a7a7a" strokeWidth="1.500"><path d="M1 8l6 6L19 1" /></svg>
          </button>
          <button aria-label="إلغاء">
            <svg viewBox="0 0 16 16" className="w-4 h-4" fill="none" stroke="#7a7a7a" strokeWidth="1.500"><path d="M1 1l14 14M15 1L1 15" /></svg>
          </button>
        </div>
        <div className="flex flex-col items-center gap-[2px] w-[25px]">
          <i className="w-[3px] h-[3px] bg-[#ccc]" />
          <i className="w-[3px] h-[3px] bg-[#ccc]" />
          <i className="w-[3px] h-[3px] bg-[#ccc]" />
        </div>
        <div className="flex items-center w-[127px] h-[30px] pr-[6px] rounded-md border border-[#6e6e6e] bg-[#292929]">
          <WideChevron />
          <input aria-label="مربع الاسم" dir="ltr" defaultValue="I17" className="flex-1 min-w-0 pl-[6px] text-lg outline-none font-['Liberation_Sans']" />
        </div>
      </div>

      {/* grid + vertical scroll bar */}
      <main className="flex flex-1 min-h-0">
        <div className="flex flex-col flex-1 min-w-0">
          <Sheet />
        </div>
        <div className="flex flex-col items-center w-[26px] pr-[2px] bg-[#0a0a0a]">
          <div className="flex flex-col items-center flex-1 w-5 pt-[5px] pb-[2px] gap-[5px] rounded-full bg-[#141414]">
            <Arrow d="M6 1l5 9H1z" />
            <div className="flex-1 w-[11px] mb-[14px] rounded-full bg-[#9a9a9a]" />
            <Arrow d="M1 2h10L6 11z" />
          </div>
        </div>
      </main>

      {/* sheet tabs */}
      <div className="relative flex items-center h-10 border-t border-[#555]">
        <div className="flex items-center gap-[33px] pr-8 text-[#aaa]">
          <button aria-label="السابق">
            <svg viewBox="0 0 7 12" className="w-[7px] h-3" fill="none" stroke="currentColor" strokeWidth="1.300"><path d="M1 .5L6 6l-5 5.500" /></svg>
          </button>
          <button aria-label="التالي">
            <svg viewBox="0 0 7 12" className="w-[7px] h-3" fill="none" stroke="currentColor" strokeWidth="1.300"><path d="M6 .5L1 6l5 5.500" /></svg>
          </button>
        </div>
        <button className="self-start w-[59px] h-[35px] mr-[63px] -mt-px rounded-b-md bg-white text-[#222] text-base">
          <span className="block mx-[9px] h-[31px] leading-[34px] border-b-2 border-[#217346]">ورقة1</span>
        </button>
        <div className="w-px h-6 mr-1 bg-[#555]" />
        <button aria-label="ورقة جديدة" className="mr-[52px]">
          <svg viewBox="0 0 16 16" className="w-4 h-4" stroke="#ddd" strokeWidth="1.600"><path d="M8 0v16M0 8h16" /></svg>
        </button>
        <div className="flex-1" />
        <div className="flex flex-col items-center gap-[2px] ml-[18px]">
          <i className="w-1 h-[3px] bg-[#ddd]" />
          <i className="w-1 h-[3px] bg-[#ddd]" />
          <i className="w-1 h-[3px] bg-[#ddd]" />
        </div>
        <div className="flex items-center w-[720px] h-[21px] ml-6 px-1 rounded-full bg-[#141414]">
          <Arrow d="M2 1l8 5-8 5z" />
          <div className="flex-1 h-[11px] mr-1 ml-[29px] rounded-full bg-[#9a9a9a]" />
          <Arrow d="M10 1L2 6l8 5z" />
        </div>
      </div>

      {/* status bar */}
      <footer className="flex items-center h-7 pr-[15px] pl-[13px] border-t border-[#3a3a3a] bg-[#141414] text-[13px]">
        <span>جاهز</span>
        <svg viewBox="0 0 20 20" className="w-5 h-5 mr-6 ml-1" fill="none" stroke="#ddd" strokeWidth="1.400">
          <circle cx="9" cy="3" r="2" />
          <path d="M2 4c1 3 4 3 5 3v4l-3 7M16 4c-1 3-4 3-5 3v3M2 4c0-2 3-1 4 1M16 4c0-2-3-1-4 1M9 12l-2 6" />
          <path d="M10 15l3 3 6-7" />
        </svg>
        <span className="whitespace-nowrap">إمكانية الوصول لذوي الاحتياجات الخاصة: جاهز لما تريده</span>
        <div className="flex-1" />
        <button aria-label="عادي" className="flex items-center justify-center w-[50px] h-full bg-[#262626]">
          <svg viewBox="0 0 18 18" className="w-[18px] h-[18px]" fill="none" stroke="#ddd" strokeWidth="1.500"><path d="M1 1h16v16H1zM6.300 1v16M11.700 1v16M1 6.300h16M1 11.700h16" /></svg>
        </button>
        <button aria-label="تخطيط الصفحة" className="flex items-center justify-center w-[50px]">
          <svg viewBox="0 0 18 18" className="w-[18px] h-[18px]" fill="none" stroke="#ddd" strokeWidth="1.500"><path d="M1 1h16v16H1zM5 4h8v10H5zM7 7h4M7 9h4M7 11h4" /></svg>
        </button>
        <button aria-label="فواصل الصفحات" className="flex items-center justify-center w-[50px]">
          <svg viewBox="0 0 18 18" className="w-[18px] h-[18px]" fill="none" stroke="#ddd" strokeWidth="1.500"><path d="M1 1h16v16H1zM1 10.500h10.500V1M6 1v9" /></svg>
        </button>
        <button className="w-[10px] mr-[7px] text-lg leading-none">−</button>
        <input
          type="range"
          aria-label="تكبير"
          min="0"
          max="200"
          value={zoom}
          onChange={(e) => setZoom(Number(e.target.value))}
          className="appearance-none w-[123px] h-px mx-[6px] bg-[#aaa] [&::-webkit-slider-thumb]:appearance-none [&::-webkit-slider-thumb]:w-[5px] [&::-webkit-slider-thumb]:h-[14px] [&::-webkit-slider-thumb]:bg-[#aaa]"
        />
        <button className="w-[10px] text-lg leading-none">+</button>
        <span dir="ltr" className="w-12 text-[13px]">{zoom}%</span>
      </footer>

      {/* watermark */}
      <div className="absolute left-[845px] bottom-0 h-[68px] w-[230px] overflow-hidden pointer-events-none">
        <span className="block text-center text-[66px] leading-[48px] font-bold text-[#8a8a8a]/60 font-['DejaVu_Sans']">خمسات</span>
      </div>
    </div>
  )
}

export default App
